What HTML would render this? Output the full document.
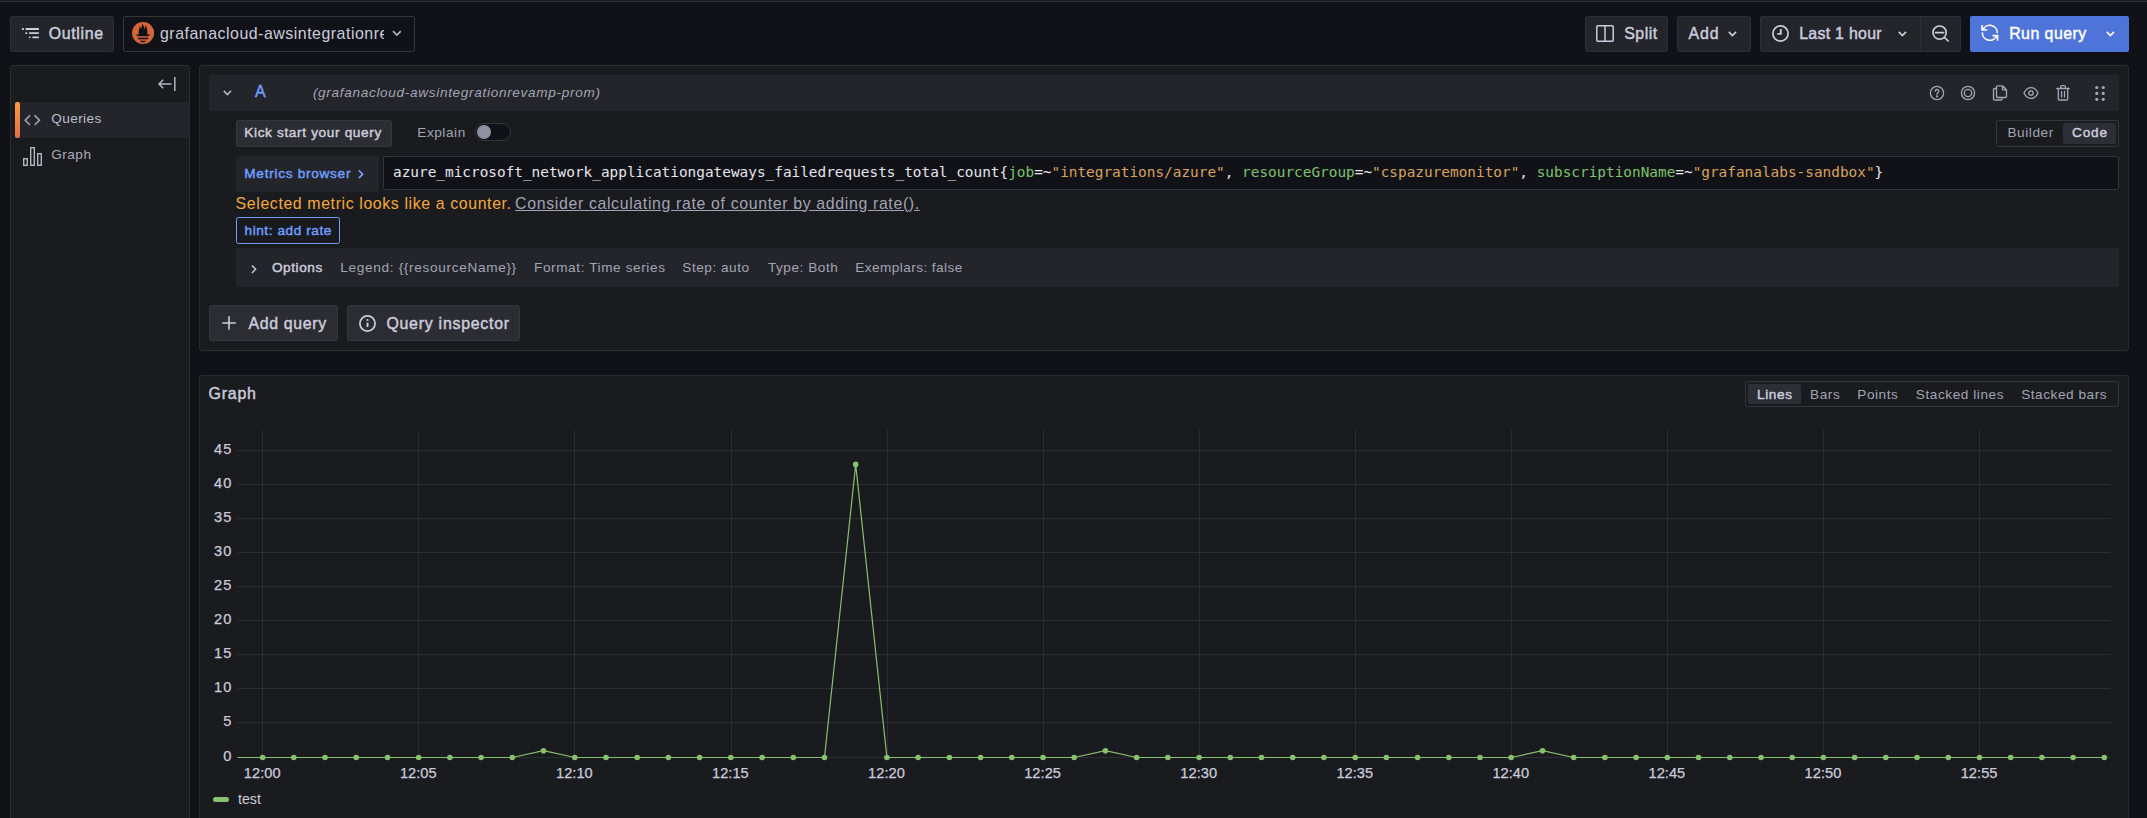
<!DOCTYPE html>
<html lang="en">
<head>
<meta charset="utf-8">
<title>Explore - Grafana</title>
<style>
*{box-sizing:border-box;margin:0;padding:0}
html,body{width:2147px;height:818px;overflow:hidden;background:#111217}
body{font-family:"Liberation Sans",sans-serif;color:#ccccdc;font-size:16px;position:relative}
.abs{position:absolute}
.t{position:absolute;white-space:nowrap;line-height:1;color:#ccccdc}
.m{-webkit-text-stroke:0.45px currentColor}
.s{color:#a3a4b4}
.b{color:#6e9fff}
svg{position:absolute;overflow:visible}
.btn{position:absolute;background:#24252b;border:1px solid #2e3036;border-radius:2.5px}
.btn2{background:#2c2d33;border-color:#37383e}
.panel{position:absolute;background:#1a1b1f;border:1px solid #2b2c32;border-radius:3px}
.mono{font-family:"DejaVu Sans Mono","Liberation Mono",monospace}
.f16{font-size:15.9px}
.f14{font-size:13.6px}
</style>
</head>
<body>
<div class="abs" style="left:0;top:0;width:2147px;height:2px;background:#1a1b1f;border-bottom:1px solid #2e2f35"></div>

<!-- ===== top toolbar ===== -->
<div class="btn" style="left:10px;top:16px;width:104px;height:36px"></div>
<svg style="left:0;top:0" width="60" height="60" viewBox="0 0 60 60"><g fill="#ccccdc"><rect x="21.900" y="28" width="2" height="2" rx=".4"/><rect x="25.400" y="28" width="13.650" height="2" rx=".8"/><rect x="25.400" y="32.200" width="1.800" height="1.900" rx=".4"/><rect x="28.900" y="32.200" width="10.150" height="1.900" rx=".8"/><rect x="28.900" y="36.400" width="1.600" height="1.800" rx=".4"/><rect x="32.200" y="36.400" width="6.850" height="1.800" rx=".8"/></g></svg>
<span id="t_outline" class="t m f16" style="left:48.71px;top:25.5px;letter-spacing:0.681px">Outline</span>

<div class="abs" style="left:123px;top:16px;width:292px;height:36px;background:#111217;border:1px solid #34363d;border-radius:2px"></div>
<svg id="prom" style="left:131.900px;top:22.300px" width="22.1" height="22.1" viewBox="0 0 22.5 22.5"><circle cx="11.25" cy="11.25" r="11.25" fill="#d4653b"/><g fill="#111217"><path d="M7 13.200C6.500 11 6.800 9 7.400 7.500 7.600 6 7.600 5 7.800 3.800 8.600 5 9 6 9.200 7.200 9.800 5.500 10.300 3.500 10.700 1.600 11.600 3.500 12.400 5.500 12.600 7.600 13.200 6.200 13.600 4.600 13.900 3 14.800 5 15.400 7 15.500 9 15.700 10.500 15.800 12 15.600 13.200Z"/><path d="M4.200 12C4.600 13.400 5.200 14.400 6 14.500H16.500C17.300 14.400 17.900 13.400 18.300 12 17.600 12.800 17 13.100 16.200 13.100H6.300C5.500 13.100 4.900 12.800 4.200 12Z"/><rect x="6" y="16" width="10.400" height="1.600"/><path d="M8.200 19.200H14.200C13.800 20.300 12.600 20.900 11.200 20.900S8.600 20.300 8.200 19.200Z"/></g></svg>
<div class="abs" style="left:159px;top:17px;width:225px;height:34px;overflow:hidden"><span id="t_ds" class="t f16" style="left:1px;top:8.5px;letter-spacing:0.52px">grafanacloud-awsintegrationrevamp-prom</span></div>
<svg style="left:392px;top:30px" width="10" height="7" viewBox="0 0 10 7"><path d="M1 1.200l3.900 3.800 3.900-3.800" fill="none" stroke="#b0b1c0" stroke-width="1.700"/></svg>

<div class="btn" style="left:1585px;top:16px;width:83px;height:36px"></div>
<svg style="left:1596px;top:25px" width="18" height="17" viewBox="0 0 18 17"><rect x=".8" y=".8" width="16.4" height="15.4" rx="1" fill="none" stroke="#ccccdc" stroke-width="1.5"/><path d="M9 1v15" stroke="#ccccdc" stroke-width="1.5"/></svg>
<span id="t_split" class="t m f16" style="left:1624.26px;top:25.5px;letter-spacing:0.526px">Split</span>

<div class="btn" style="left:1677px;top:16px;width:74px;height:36px"></div>
<span id="t_add" class="t m f16" style="left:1688.44px;top:25.5px;letter-spacing:0.957px">Add</span>
<svg style="left:1727.5px;top:31px" width="9" height="6" viewBox="0 0 9 6"><path d="M.8 .9l3.600 3.600L8 .9" fill="none" stroke="#ccccdc" stroke-width="1.700"/></svg>

<div class="btn" style="left:1760px;top:16px;width:161px;height:36px;border-radius:2px 0 0 2px"></div>
<svg style="left:1771.500px;top:25px" width="17" height="17" viewBox="0 0 17 17"><circle cx="8.500" cy="8.500" r="7.600" fill="none" stroke="#ccccdc" stroke-width="1.700"/><path d="M8.800 3.900v5H5.300" fill="none" stroke="#ccccdc" stroke-width="1.900"/></svg>
<span id="t_last" class="t m f16" style="left:1799.13px;top:25.5px;letter-spacing:0.300px">Last 1 hour</span>
<svg style="left:1897.5px;top:31px" width="9" height="6" viewBox="0 0 9 6"><path d="M.8 .9l3.600 3.600L8 .9" fill="none" stroke="#ccccdc" stroke-width="1.700"/></svg>
<div class="btn" style="left:1920px;top:16px;width:41px;height:36px;border-radius:0 2px 2px 0"></div>
<svg style="left:1931.500px;top:25px" width="18" height="17" viewBox="0 0 18 17"><circle cx="7.600" cy="7.600" r="6.600" fill="none" stroke="#ccccdc" stroke-width="1.700"/><path d="M3.600 7.600h8M12.400 12.400l3.800 3.600" stroke="#ccccdc" stroke-width="1.700" stroke-linecap="round"/></svg>

<div class="abs" style="left:1970px;top:16px;width:159px;height:36px;background:#4f74d9;border-radius:2px"></div>
<svg id="sync" style="left:1979.400px;top:22.400px" width="21.6" height="21.6" viewBox="0 0 24 24"><path d="M3.4 3.200V8.900H9.100M4.300 8.900A8.300 8.300 0 0 1 20.300 12.400M14.900 15.100H20.600V20.800M3.700 11.600A8.300 8.300 0 0 0 19.700 15.100" fill="none" stroke="#fff" stroke-width="1.800" stroke-linecap="butt" stroke-linejoin="miter"/></svg>
<span id="t_run" class="t m f16" style="left:2009.14px;top:25.5px;color:#fff;letter-spacing:0.479px">Run query</span>
<svg style="left:2105.500px;top:31px" width="9" height="6" viewBox="0 0 9 6"><path d="M.8 .9l3.600 3.600L8 .9" fill="none" stroke="#fff" stroke-width="1.700"/></svg>

<!-- ===== left sidebar ===== -->
<div class="panel" style="left:10px;top:65px;width:180px;height:760px"></div>
<svg style="left:158px;top:77px" width="18" height="14" viewBox="0 0 18 14"><path d="M16.800 0v14M13.500 7H1.200M5.200 2.800L1 7l4.200 4.200" fill="none" stroke="#b4b5c4" stroke-width="1.5"/></svg>
<div class="abs" style="left:15px;top:102px;width:174px;height:36px;background:#24252b"></div>
<div class="abs" style="left:15px;top:102px;width:5px;height:36px;border-radius:2px;background:linear-gradient(#fd9b3d,#e46c48)"></div>
<svg style="left:24px;top:114px" width="17" height="12" viewBox="0 0 17 12"><path d="M6 1.400L1.200 6.200l4.800 4.800M10.600 1.400l4.800 4.800-4.800 4.800" fill="none" stroke="#a3a4b2" stroke-width="1.600"/></svg>
<span id="t_queries" class="t f14" style="left:51.21px;top:112.24px;color:#bcbdcc;letter-spacing:0.419px">Queries</span>
<svg style="left:23px;top:147px" width="19" height="19" viewBox="0 0 19 19"><g fill="none" stroke="#b4b5c4" stroke-width="1.4"><rect x=".7" y="11.7" width="3.6" height="6.6"/><rect x="7.7" y=".7" width="3.6" height="17.6"/><rect x="14.7" y="6.7" width="3.6" height="11.6"/></g></svg>
<span id="t_graphnav" class="t f14" style="left:51.31px;top:148.24px;color:#a9aaba;letter-spacing:0.470px">Graph</span>

<!-- ===== query panel ===== -->
<div class="panel" style="left:199px;top:65px;width:1930px;height:286px"></div>
<div class="abs" style="left:209px;top:75px;width:1910px;height:36px;background:#24252b;border-radius:2px"></div>
<svg style="left:222.600px;top:90.200px" width="9" height="6" viewBox="0 0 9 6"><path d="M.8 .9l3.600 3.600L8 .9" fill="none" stroke="#b4b5c4" stroke-width="1.600"/></svg>
<span id="t_a" class="t m b f16" style="left:254.93px;top:84.44px;letter-spacing:0px">A</span>
<span id="t_dsname" class="t s f14" style="left:312.89px;top:86.09px;font-style:italic;letter-spacing:0.677px">(grafanacloud-awsintegrationrevamp-prom)</span>

<!-- header icons -->
<svg id="hdricons" style="left:1925px;top:81px" width="190" height="24" viewBox="1925 81 190 24"><g fill="none" stroke="#a6a7b6" stroke-width="1.300" stroke-linecap="round" stroke-linejoin="round">
<circle cx="1937" cy="93" r="6.600"/><path d="M1935.200 91.200a1.800 1.800 0 1 1 2.600 1.700c-.6 .3-.8 .7-.8 1.300"/><circle cx="1937" cy="96.300" r=".5" fill="#a6a7b6"/>
<circle cx="1968" cy="93" r="6.600"/><circle cx="1968" cy="93" r="3.700"/>
<path d="M1996.500 88.500h-2a1 1 0 0 0-1 1v9.500a1 1 0 0 0 1 1h6.500a1 1 0 0 0 1-1v-1.500"/><path d="M1997.500 85.800h5l4 4v6.700a1 1 0 0 1-1 1h-8a1 1 0 0 1-1-1v-9.700a1 1 0 0 1 1-1zM2002.500 85.800v4h4"/>
<path d="M2024 93c1.600-3.400 4.200-5.400 7-5.400s5.400 2 7 5.400c-1.600 3.400-4.200 5.400-7 5.400s-5.400-2-7-5.400z"/><circle cx="2031" cy="93" r="2.200"/>
<path d="M2056.800 88.500h12.400M2058.300 88.500v10.300a1.200 1.200 0 0 0 1.200 1.200h7a1.200 1.200 0 0 0 1.200-1.200v-10.300M2060.600 88.300v-1.500a1.200 1.200 0 0 1 1.200-1.200h2.400a1.200 1.200 0 0 1 1.200 1.200v1.500M2061.500 91.500v5.500M2064.500 91.500v5.500"/>
</g><g fill="#a6a7b6"><circle cx="2096.800" cy="87.500" r="1.600"/><circle cx="2103.200" cy="87.500" r="1.600"/><circle cx="2096.800" cy="93.400" r="1.600"/><circle cx="2103.200" cy="93.400" r="1.600"/><circle cx="2096.800" cy="99.300" r="1.600"/><circle cx="2103.200" cy="99.300" r="1.600"/></g></svg>

<div class="btn btn2" style="left:236px;top:120px;width:156px;height:27px"></div>
<span id="t_kick" class="t m f14" style="left:244.26px;top:126.24px;letter-spacing:0.656px">Kick start your query</span>
<span id="t_explain" class="t s f14" style="left:417.28px;top:126.24px;letter-spacing:0.559px">Explain</span>
<div class="abs" style="left:475px;top:123px;width:36px;height:18px;border-radius:9px;background:#111217;border:1px solid #34363d"></div>
<div class="abs" style="left:477px;top:125px;width:14px;height:14px;border-radius:7px;background:#9091a0"></div>

<div class="abs" style="left:1996px;top:120px;width:123px;height:27px;border:1px solid #34363c;border-radius:2px;background:#1a1b1f"></div>
<div class="abs" style="left:2063px;top:123px;width:53px;height:21px;background:#2d2f36;border-radius:2px"></div>
<span id="t_builder" class="t s f14" style="left:2007.40px;top:126.24px;letter-spacing:0.590px">Builder</span>
<span id="t_code" class="t m f14" style="left:2072.09px;top:126.24px;letter-spacing:0.798px">Code</span>

<div class="abs" style="left:236px;top:156px;width:143px;height:36px;background:#24252b;border-radius:2px"></div>
<span id="t_metrics" class="t m b f14" style="left:244.32px;top:167.49px;letter-spacing:0.728px">Metrics browser</span>
<svg style="left:358px;top:170px" width="6" height="9" viewBox="0 0 6 9"><path d="M.9 .5l3.800 3.700-3.800 3.700" fill="none" stroke="#85abff" stroke-width="1.500"/></svg>
<div class="abs" style="left:383px;top:156px;width:1736px;height:34px;background:#111217;border:1px solid #34363d;border-radius:2px"></div>
<span id="t_query" class="t mono" style="left:393px;top:164.90px;font-size:14.400px;color:#e6e6ee">azure_microsoft_network_applicationgateways_failedrequests_total_count{<span style="color:#7ec46b">job</span>=~<span style="color:#d9a35e">"integrations/azure"</span>, <span style="color:#7ec46b">resourceGroup</span>=~<span style="color:#d9a35e">"cspazuremonitor"</span>, <span style="color:#7ec46b">subscriptionName</span>=~<span style="color:#d9a35e">"grafanalabs-sandbox"</span>}</span>

<span id="t_warn" class="t f16" style="left:235.58px;top:195.54px;color:#f5a93b;letter-spacing:0.610px">Selected metric looks like a counter.</span>
<span id="t_link" class="t s f16" style="left:515.12px;top:195.54px;text-decoration:underline;letter-spacing:0.641px">Consider calculating rate of counter by adding rate().</span>
<div class="abs" style="left:236px;top:217px;width:104px;height:27px;border:1px solid #6e9bff;border-radius:2.5px;background:#191a1e"></div>
<span id="t_hint" class="t m b f14" style="left:244.51px;top:223.69px;letter-spacing:0.573px">hint: add rate</span>

<div class="abs" style="left:236px;top:248px;width:1883px;height:39px;background:#24252b;border-radius:2px"></div>
<svg style="left:251px;top:264.800px" width="6" height="9" viewBox="0 0 6 9"><path d="M.9 .5l3.800 3.700-3.800 3.700" fill="none" stroke="#ccccdc" stroke-width="1.400"/></svg>
<span id="t_options" class="t m f14" style="left:271.93px;top:260.59px;letter-spacing:0.580px">Options</span>
<span id="t_legend" class="t s f14" style="left:340.28px;top:260.59px;letter-spacing:0.681px">Legend: {{resourceName}}</span>
<span id="t_format" class="t s f14" style="left:533.98px;top:260.59px;letter-spacing:0.604px">Format: Time series</span>
<span id="t_step" class="t s f14" style="left:682.34px;top:260.59px;letter-spacing:0.531px">Step: auto</span>
<span id="t_type" class="t s f14" style="left:767.92px;top:260.59px;letter-spacing:0.545px">Type: Both</span>
<span id="t_exemplars" class="t s f14" style="left:855.34px;top:260.59px;letter-spacing:0.427px">Exemplars: false</span>

<div class="btn btn2" style="left:209px;top:305px;width:129px;height:36px"></div>
<svg style="left:222px;top:316px" width="14" height="14" viewBox="0 0 14 14"><path d="M7 0.200v13.600M0.200 7h13.600" stroke="#ccccdc" stroke-width="1.600"/></svg>
<span id="t_addq" class="t m f16" style="left:248.51px;top:315.54px;letter-spacing:0.665px">Add query</span>
<div class="btn btn2" style="left:347px;top:305px;width:173px;height:36px"></div>
<svg style="left:358.500px;top:314.500px" width="17" height="17" viewBox="0 0 17 17"><circle cx="8.500" cy="8.500" r="7.600" fill="none" stroke="#ccccdc" stroke-width="1.700"/><path d="M8.500 7.600v4.400" stroke="#ccccdc" stroke-width="1.900"/><circle cx="8.500" cy="5" r="1.100" fill="#ccccdc"/></svg>
<span id="t_qi" class="t m f16" style="left:386.41px;top:315.54px;letter-spacing:0.752px">Query inspector</span>

<!-- ===== graph panel ===== -->
<div class="panel" style="left:199px;top:375px;width:1930px;height:460px"></div>
<span id="t_graph" class="t m f16" style="left:208.46px;top:385.64px;letter-spacing:0.835px">Graph</span>
<div class="abs" style="left:1745px;top:381px;width:374px;height:26px;border:1px solid #34363c;border-radius:2px;background:#1a1b1f"></div>
<div class="abs" style="left:1748px;top:384px;width:53px;height:20px;background:#2d2f36;border-radius:2px"></div>
<span id="t_lines" class="t m f14" style="left:1757.08px;top:387.79px;letter-spacing:0.593px">Lines</span>
<span id="t_bars" class="t s f14" style="left:1810.01px;top:387.79px;letter-spacing:0.589px">Bars</span>
<span id="t_points" class="t s f14" style="left:1857.33px;top:387.79px;letter-spacing:0.527px">Points</span>
<span id="t_slines" class="t s f14" style="left:1915.78px;top:387.79px;letter-spacing:0.576px">Stacked lines</span>
<span id="t_sbars" class="t s f14" style="left:2021.13px;top:387.79px;letter-spacing:0.551px">Stacked bars</span>

<!--CHART-->
<svg style="left:0;top:0" width="2147" height="818" viewBox="0 0 2147 818">
<g stroke="#2b2d32" stroke-width="1" fill="none">
<path d="M237.5 450.5H2110.5"/>
<path d="M237.5 484.5H2110.5"/>
<path d="M237.5 518.5H2110.5"/>
<path d="M237.5 552.5H2110.5"/>
<path d="M237.5 586.5H2110.5"/>
<path d="M237.5 620.5H2110.5"/>
<path d="M237.5 654.5H2110.5"/>
<path d="M237.5 688.5H2110.5"/>
<path d="M237.5 722.5H2110.5"/>
<path d="M237.5 757.5H2110.5"/>
<path d="M262.5 430V757.5"/>
<path d="M418.5 430V757.5"/>
<path d="M574.5 430V757.5"/>
<path d="M731.5 430V757.5"/>
<path d="M887.5 430V757.5"/>
<path d="M1043.5 430V757.5"/>
<path d="M1199.5 430V757.5"/>
<path d="M1355.5 430V757.5"/>
<path d="M1511.5 430V757.5"/>
<path d="M1667.5 430V757.5"/>
<path d="M1823.5 430V757.5"/>
<path d="M1979.5 430V757.5"/>
</g>
<g font-family="Liberation Sans, sans-serif" font-size="14.6" fill="#cbccdb" stroke="#cbccdb" stroke-width="0.25" letter-spacing="1.2">
<text x="232.6" y="453.8" text-anchor="end">45</text>
<text x="232.6" y="487.8" text-anchor="end">40</text>
<text x="232.6" y="521.8" text-anchor="end">35</text>
<text x="232.6" y="555.8" text-anchor="end">30</text>
<text x="232.6" y="589.8" text-anchor="end">25</text>
<text x="232.6" y="623.8" text-anchor="end">20</text>
<text x="232.6" y="657.8" text-anchor="end">15</text>
<text x="232.6" y="691.8" text-anchor="end">10</text>
<text x="232.6" y="725.8" text-anchor="end">5</text>
<text x="232.6" y="761.1" text-anchor="end">0</text>
<text x="262.2" y="778.4" text-anchor="middle" letter-spacing="0.05">12:00</text>
<text x="418.3" y="778.4" text-anchor="middle" letter-spacing="0.05">12:05</text>
<text x="574.4" y="778.4" text-anchor="middle" letter-spacing="0.05">12:10</text>
<text x="730.4" y="778.4" text-anchor="middle" letter-spacing="0.05">12:15</text>
<text x="886.5" y="778.4" text-anchor="middle" letter-spacing="0.05">12:20</text>
<text x="1042.6" y="778.4" text-anchor="middle" letter-spacing="0.05">12:25</text>
<text x="1198.7" y="778.4" text-anchor="middle" letter-spacing="0.05">12:30</text>
<text x="1354.8" y="778.4" text-anchor="middle" letter-spacing="0.05">12:35</text>
<text x="1510.8" y="778.4" text-anchor="middle" letter-spacing="0.05">12:40</text>
<text x="1666.9" y="778.4" text-anchor="middle" letter-spacing="0.05">12:45</text>
<text x="1823.0" y="778.4" text-anchor="middle" letter-spacing="0.05">12:50</text>
<text x="1979.1" y="778.4" text-anchor="middle" letter-spacing="0.05">12:55</text>
</g>
<path d="M237.5 757.5 L262.6 757.5 L293.8 757.5 L325.0 757.5 L356.2 757.5 L387.5 757.5 L418.7 757.5 L449.9 757.5 L481.1 757.5 L512.3 757.5 L543.5 750.7 L574.8 757.5 L606.0 757.5 L637.2 757.5 L668.4 757.5 L699.6 757.5 L730.8 757.5 L762.1 757.5 L793.3 757.5 L824.5 757.5 L855.7 464.4 L886.9 757.5 L918.1 757.5 L949.4 757.5 L980.6 757.5 L1011.8 757.5 L1043.0 757.5 L1074.2 757.5 L1105.4 750.7 L1136.6 757.5 L1167.9 757.5 L1199.1 757.5 L1230.3 757.5 L1261.5 757.5 L1292.7 757.5 L1323.9 757.5 L1355.2 757.5 L1386.4 757.5 L1417.6 757.5 L1448.8 757.5 L1480.0 757.5 L1511.2 757.5 L1542.5 750.7 L1573.7 757.5 L1604.9 757.5 L1636.1 757.5 L1667.3 757.5 L1698.5 757.5 L1729.8 757.5 L1761.0 757.5 L1792.2 757.5 L1823.4 757.5 L1854.6 757.5 L1885.8 757.5 L1917.0 757.5 L1948.3 757.5 L1979.5 757.5 L2010.7 757.5 L2041.9 757.5 L2073.1 757.5 L2104.3 757.5" fill="none" stroke="#88c06f" stroke-width="1.2" stroke-linejoin="round"/>
<g fill="#88c06f">
<circle cx="262.6" cy="757.5" r="2.8"/>
<circle cx="293.8" cy="757.5" r="2.8"/>
<circle cx="325.0" cy="757.5" r="2.8"/>
<circle cx="356.2" cy="757.5" r="2.8"/>
<circle cx="387.5" cy="757.5" r="2.8"/>
<circle cx="418.7" cy="757.5" r="2.8"/>
<circle cx="449.9" cy="757.5" r="2.8"/>
<circle cx="481.1" cy="757.5" r="2.8"/>
<circle cx="512.3" cy="757.5" r="2.8"/>
<circle cx="543.5" cy="750.7" r="2.8"/>
<circle cx="574.8" cy="757.5" r="2.8"/>
<circle cx="606.0" cy="757.5" r="2.8"/>
<circle cx="637.2" cy="757.5" r="2.8"/>
<circle cx="668.4" cy="757.5" r="2.8"/>
<circle cx="699.6" cy="757.5" r="2.8"/>
<circle cx="730.8" cy="757.5" r="2.8"/>
<circle cx="762.1" cy="757.5" r="2.8"/>
<circle cx="793.3" cy="757.5" r="2.8"/>
<circle cx="824.5" cy="757.5" r="2.8"/>
<circle cx="855.7" cy="464.4" r="2.8"/>
<circle cx="886.9" cy="757.5" r="2.8"/>
<circle cx="918.1" cy="757.5" r="2.8"/>
<circle cx="949.4" cy="757.5" r="2.8"/>
<circle cx="980.6" cy="757.5" r="2.8"/>
<circle cx="1011.8" cy="757.5" r="2.8"/>
<circle cx="1043.0" cy="757.5" r="2.8"/>
<circle cx="1074.2" cy="757.5" r="2.8"/>
<circle cx="1105.4" cy="750.7" r="2.8"/>
<circle cx="1136.6" cy="757.5" r="2.8"/>
<circle cx="1167.9" cy="757.5" r="2.8"/>
<circle cx="1199.1" cy="757.5" r="2.8"/>
<circle cx="1230.3" cy="757.5" r="2.8"/>
<circle cx="1261.5" cy="757.5" r="2.8"/>
<circle cx="1292.7" cy="757.5" r="2.8"/>
<circle cx="1323.9" cy="757.5" r="2.8"/>
<circle cx="1355.2" cy="757.5" r="2.8"/>
<circle cx="1386.4" cy="757.5" r="2.8"/>
<circle cx="1417.6" cy="757.5" r="2.8"/>
<circle cx="1448.8" cy="757.5" r="2.8"/>
<circle cx="1480.0" cy="757.5" r="2.8"/>
<circle cx="1511.2" cy="757.5" r="2.8"/>
<circle cx="1542.5" cy="750.7" r="2.8"/>
<circle cx="1573.7" cy="757.5" r="2.8"/>
<circle cx="1604.9" cy="757.5" r="2.8"/>
<circle cx="1636.1" cy="757.5" r="2.8"/>
<circle cx="1667.3" cy="757.5" r="2.8"/>
<circle cx="1698.5" cy="757.5" r="2.8"/>
<circle cx="1729.8" cy="757.5" r="2.8"/>
<circle cx="1761.0" cy="757.5" r="2.8"/>
<circle cx="1792.2" cy="757.5" r="2.8"/>
<circle cx="1823.4" cy="757.5" r="2.8"/>
<circle cx="1854.6" cy="757.5" r="2.8"/>
<circle cx="1885.8" cy="757.5" r="2.8"/>
<circle cx="1917.0" cy="757.5" r="2.8"/>
<circle cx="1948.3" cy="757.5" r="2.8"/>
<circle cx="1979.5" cy="757.5" r="2.8"/>
<circle cx="2010.7" cy="757.5" r="2.8"/>
<circle cx="2041.9" cy="757.5" r="2.8"/>
<circle cx="2073.1" cy="757.5" r="2.8"/>
<circle cx="2104.3" cy="757.5" r="2.8"/>
</g>
<rect x="213" y="797" width="16" height="5" rx="2.5" fill="#88c06f"/>
<text x="238" y="804" font-family="Liberation Sans, sans-serif" font-size="14.2" fill="#ccccdc">test</text>
</svg>
<!--/CHART-->
</body>
</html>
